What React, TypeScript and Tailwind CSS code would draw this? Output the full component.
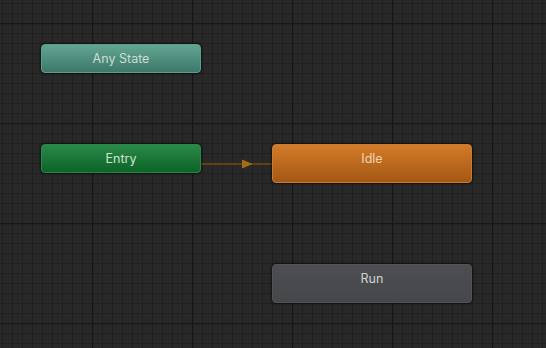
import * as React from "react";

type StateNode = {
  label: string;
  x: number;
  y: number;
  w: number;
  h: number;
  className: string;
  textClass: string;
};

const nodes: StateNode[] = [
  {
    label: "Any State",
    x: 41,
    y: 44,
    w: 160,
    h: 29,
    className: "bg-gradient-to-b from-[#62a592] to-[#3d786a] border-[#5c9d8b]",
    textClass: "text-[#c9ddd6]",
  },
  {
    label: "Entry",
    x: 41,
    y: 144,
    w: 160,
    h: 29,
    className: "bg-gradient-to-b from-[#2a8a49] to-[#0b6326] border-[#2a8646]",
    textClass: "text-[#cfe2d2]",
  },
  {
    label: "Idle",
    x: 272,
    y: 144,
    w: 200,
    h: 39,
    className: "bg-gradient-to-b from-[#d37b28] to-[#a45814] border-[#c97a30]",
    textClass: "text-[#f0d2b6]",
  },
  {
    label: "Run",
    x: 272,
    y: 264,
    w: 200,
    h: 39,
    className: "bg-gradient-to-b from-[#4d4e51] to-[#46474a] border-[#525356]",
    textClass: "text-[#d2d2d2]",
  },
];

// Background grid of the animator canvas
const Grid = () => (
  <svg className="absolute inset-0" width="546" height="348" xmlns="http://www.w3.org/2000/svg">
    <defs>
      <pattern id="minor" width="10" height="10" patternUnits="userSpaceOnUse" x="2" y="3">
        <path d="M0 0.5H10M0.5 0V10" stroke="#202020" strokeWidth="1" fill="none" />
      </pattern>
      <pattern id="major" width="100" height="100" patternUnits="userSpaceOnUse" x="92" y="23">
        <path d="M0 0.5H100M0.5 0V100" stroke="#171717" strokeWidth="1.6" fill="none" />
      </pattern>
    </defs>
    <rect width="546" height="348" fill="#282828" />
    <rect width="546" height="348" fill="url(#minor)" />
    <rect width="546" height="348" fill="url(#major)" />
  </svg>
);

const Transition = () => (
  <svg className="absolute inset-0" width="546" height="348" xmlns="http://www.w3.org/2000/svg">
    <line x1="201" y1="164" x2="272" y2="164" stroke="#5e4314" strokeWidth="2" />
    <polygon points="242,159.5 252.5,164 242,168.5" fill="#a66d10" />
  </svg>
);

export default function App() {
  return (
    <div className="relative w-[546px] h-[348px] overflow-hidden bg-[#282828] font-['Inter','Liberation_Sans',sans-serif]">
      <Grid />
      <Transition />
      {nodes.map((n) => (
        <div
          key={n.label}
          className={`absolute rounded-[4px] border shadow-[0_0_2px_1px_rgba(0,0,0,0.5)] ${n.className}`}
          style={{ left: n.x, top: n.y, width: n.w, height: n.h }}
        >
          <div className={`h-[28px] flex items-center justify-center text-[12.5px] ${n.textClass}`}>
            {n.label}
          </div>
        </div>
      ))}
    </div>
  );
}
